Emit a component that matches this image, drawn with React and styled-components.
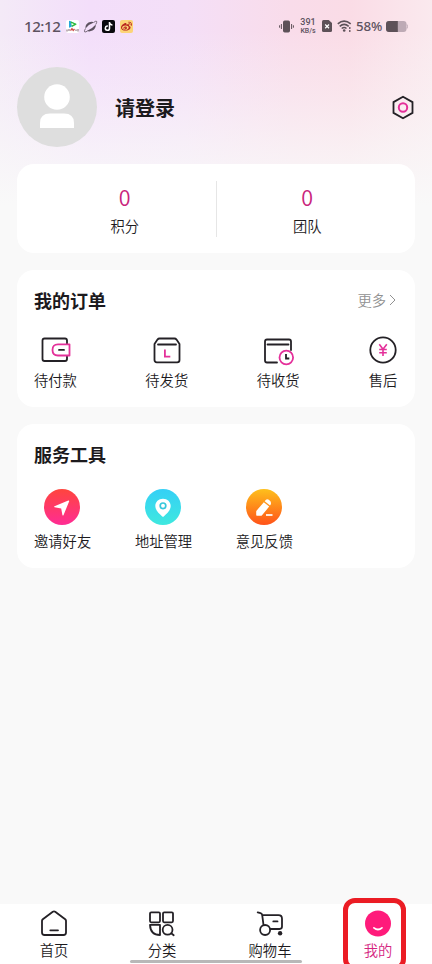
import React, { useState } from "react";
import styled, { createGlobalStyle } from "styled-components";
import { FaTiktok, FaWeibo } from "react-icons/fa6";

const GlobalStyle = createGlobalStyle`
  * {
    box-sizing: border-box;
  }
  body {
    margin: 0;
    background: #f9f9f9;
    color: #1c1a1d;
    font-family: "Noto Sans CJK SC", "Noto Sans", sans-serif;
  }
  svg {
    display: block;
    flex: none;
    overflow: visible;
  }
`;

const Page = styled.div`
  display: flex;
  flex-direction: column;
  width: 432px;
  height: 964px;
  overflow: hidden;
  background:
    linear-gradient(to bottom, rgba(249, 249, 249, 0) 30px, rgba(249, 249, 249, 0.35) 100px, #f9f9f9 205px),
    linear-gradient(to right, #f4eaf7 0, #f3defa 90px, #f4dff7 185px, #f9dcea 290px, #fadce6 350px, #fae9ee 432px);
  background-color: #f9f9f9;
`;

const StatusBar = styled.div`
  display: flex;
  justify-content: space-between;
  align-items: center;
  height: 52px;
  padding: 0 24px;
  color: #5d5260;
  font-family: "Noto Sans", sans-serif;
`;
const StatusGroup = styled.div`
  display: flex;
  align-items: center;
  gap: 5px;
`;
const Clock = styled.span`
  width: 37px;
  font-size: 15.2px;
  font-weight: 500;
  letter-spacing: -0.5px;
  line-height: 20px;
  white-space: nowrap;
`;
const AppBadge = styled.span`
  display: flex;
  align-items: center;
  justify-content: center;
  width: 13px;
  height: 13px;
  border-radius: 2px;
  background: ${(props) => props.bg};
  color: ${(props) => props.color};
  font-size: ${(props) => props.size || 9}px;
`;
const Speed = styled.span`
  display: flex;
  flex-direction: column;
  align-items: center;
  width: 18px;
  font-family: Roboto, sans-serif;
  font-weight: 500;
  white-space: nowrap;
`;
const SpeedValue = styled.span`
  font-size: 9px;
  line-height: 9px;
`;
const SpeedUnit = styled.span`
  font-size: 7px;
  line-height: 8px;
`;
const Percent = styled.span`
  width: 27px;
  margin: 0 -2px 0 -1px;
  font-size: 13.3px;
  font-weight: 500;
  letter-spacing: -0.1px;
  line-height: 18px;
  white-space: nowrap;
`;

const Header = styled.header`
  display: flex;
  align-items: center;
  height: 80px;
  margin: 15px 17px 17px;
`;
const Avatar = styled.div`
  width: 80px;
  height: 80px;
  border-radius: 50%;
  background: #dedede;
`;
const UserName = styled.h1`
  flex: 1;
  margin: 2px 0 0 18px;
  font-size: 20px;
  font-weight: 700;
  line-height: 28px;
`;

const Card = styled.section`
  flex: none;
  width: 398px;
  height: ${(props) => props.height}px;
  margin: 0 17px 17px;
  padding: 0 17px;
  border-radius: 17px;
  background: #fff;
`;
const StatsCard = styled(Card)`
  display: flex;
  align-items: center;
`;
const Stat = styled.div`
  flex: 1;
  display: flex;
  flex-direction: column;
  align-items: center;
  height: 56px;
  & + & {
    border-left: 1px solid #e6e6e6;
  }
`;
const StatValue = styled.span`
  margin-top: 2px;
  color: #c9247c;
  font-size: 21.5px;
  font-weight: 350;
  line-height: 28px;
`;
const Label = styled.span`
  color: ${(props) => props.color || "#1c1a1d"};
  font-size: 14.3px;
  font-weight: 350;
  line-height: 20px;
  white-space: nowrap;
`;
const StatLabel = styled(Label)`
  margin-top: 5px;
`;

const CardHead = styled.div`
  display: flex;
  justify-content: space-between;
  align-items: center;
  height: 26px;
  margin: 17px 0 22px;
`;
const CardTitle = styled.h2`
  margin: 0;
  font-size: 18px;
  font-weight: 700;
  line-height: 26px;
`;
const More = styled.span`
  display: flex;
  align-items: center;
  gap: 2px;
  margin-right: 1px;
  color: #919191;
  font-size: 14.3px;
  font-weight: 350;
  line-height: 20px;
`;
const Orders = styled.div`
  display: flex;
  justify-content: space-between;
`;
const OrderItem = styled.div`
  display: flex;
  flex-direction: column;
  align-items: center;
  gap: 5px;
`;
const Tools = styled.div`
  display: flex;
  gap: 43.7px;
`;
const ToolItem = styled.div`
  display: flex;
  flex-direction: column;
  align-items: center;
  gap: 6px;
`;
const ToolIcon = styled.div`
  width: 36px;
  height: 36px;
  margin-right: 1px;
  border-radius: 50%;
  background: linear-gradient(${(props) => props.from}, ${(props) => props.to});
`;

const TabBar = styled.nav`
  position: relative;
  display: flex;
  flex: none;
  height: 60px;
  margin-top: auto;
  background: #fff;
`;
const Tab = styled.div`
  position: relative;
  flex: 1;
  display: flex;
  flex-direction: column;
  align-items: center;
  gap: 2px;
  padding-top: 6px;
  cursor: pointer;
`;
const HomeIndicator = styled.div`
  position: absolute;
  left: 130px;
  bottom: 1px;
  width: 172px;
  height: 3px;
  border-radius: 2px;
  background: #b8b8b8;
`;
const Highlight = styled.div`
  position: absolute;
  top: -6px;
  left: 19px;
  width: 63px;
  height: 73px;
  border: 5px solid #eb1c24;
  border-radius: 12px;
`;

const ink = { fill: "none", stroke: "#242126", strokeWidth: 1.8, strokeLinecap: "round", strokeLinejoin: "round" };
const pink = { ...ink, stroke: "#e4309a" };

const WalletIcon = () => (
  <svg width="30" height="30" viewBox="-1 0 30 30">
    <path {...ink} d="M26 9V5.500Q26 3.500 24 3.500H3.500Q1.500 3.500 1.500 5.500V24Q1.500 26 3.500 26H24Q26 26 26 24V21" />
    <path {...pink} d="M17 9.300H28.500V20.500H17Q11.500 20.500 11.500 15Q11.500 9.300 17 9.300Z" />
    <path {...ink} d="M18 14.900H23" />
  </svg>
);

const BoxIcon = () => (
  <svg width="30" height="30" viewBox="0 0 30 30">
    <path {...ink} d="M2.500 9L5.500 4.600Q6.300 3.500 7.500 3.500H22.500Q23.700 3.500 24.500 4.600L27.500 9V25Q27.500 27.300 25.200 27.300H4.800Q2.500 27.300 2.500 25Z" />
    <path {...ink} d="M6 9.500H24" />
    <path {...pink} strokeLinecap="butt" strokeLinejoin="miter" d="M12.900 14.500V21.600H18.300" />
  </svg>
);

const ReceiveIcon = () => (
  <svg width="30" height="30" viewBox="0 0 30 30">
    <path {...ink} d="M14 27.500H4Q2 27.500 2 25.500V6.500Q2 4.500 4 4.500H26Q28 4.500 28 6.500V15" />
    <path {...ink} d="M4.500 9.500H25.500" />
    <circle {...pink} cx="23.300" cy="22.500" r="6.800" />
    <path {...ink} strokeLinecap="butt" strokeLinejoin="miter" d="M23 19V23.500H26.300" />
  </svg>
);

const RefundIcon = () => (
  <svg width="30" height="30" viewBox="0 0 30 30">
    <circle {...ink} cx="15" cy="15" r="12.700" />
    <path {...pink} strokeWidth="1.600" strokeLinecap="butt" d="M11.300 9.300L15 14.200L18.800 9.300M15 14V21M11.200 14.500H18.800M11.200 17.700H18.800" />
  </svg>
);

const HomeIcon = () => (
  <svg width="28" height="28" viewBox="0 0 28 28">
    <path {...ink} d="M2 10.800Q2 9.900 2.800 9.200L12.800 1.700Q14 .900 15.200 1.700L25.200 9.200Q26 9.900 26 10.800V22.500Q26 25 23.500 25H4.500Q2 25 2 22.500Z" />
    <path {...ink} d="M10.300 20.300H18" />
  </svg>
);

const CategoryIcon = () => (
  <svg width="28" height="28" viewBox="0 0 28 28">
    <rect {...ink} x="2" y="2.300" width="10" height="10" rx="1.200" />
    <rect {...ink} x="15" y="2.300" width="10" height="10" rx="1.200" />
    <path {...ink} d="M2 14.900H12V25Q2.500 25 2 14.900Z" />
    <circle {...ink} cx="19.600" cy="19.800" r="4.900" />
    <path {...ink} d="M23.200 23.200L25.700 25.200" />
  </svg>
);

const CartIcon = () => (
  <svg width="28" height="28" viewBox="0 0 28 28">
    <path {...ink} d="M1.700 2.300L4.600 3.200Q6 3.600 6.200 5L7.500 15M6.100 5.200H22.500Q26 5.200 26 8.700V16.500Q26 18.800 23.500 19H14.500" />
    <circle {...ink} cx="9.100" cy="20" r="5" />
    <path {...ink} d="M17.300 11.400H21.500" />
    <circle cx="24.100" cy="23.300" r="2.200" fill="#242126" />
  </svg>
);

const MineIcon = () => (
  <svg width="28" height="28" viewBox="0 0 28 28">
    <circle cx="14" cy="13.500" r="13" fill="#ff1b7b" />
    <path d="M9.900 17.800Q14 21.200 18 17.800" fill="none" stroke="#fff" strokeWidth="1.700" strokeLinecap="round" />
  </svg>
);

const SettingsIcon = () => (
  <svg width="24" height="26" viewBox="0 0 24 26">
    <path {...ink} strokeLinejoin="miter" d="M12 2.700L21.500 8.100V18.900L12 24.300L2.500 18.900V8.100Z" />
    <circle {...pink} strokeWidth="2" cx="12" cy="13.500" r="4.200" />
  </svg>
);

const VideoAppIcon = () => (
  <svg width="13" height="13" viewBox="0 0 13 13">
    <rect width="13" height="13" rx="2" fill="#fff" />
    <path d="M3 1Q3 .500 4 .900L10 4L4 7.500Q3 8 3 7Z" fill="#25a6dc" />
    <path d="M4.500 1.200L10.300 3.700Q10.900 4.200 10.200 4.700L6 7Z" fill="#31bd3c" />
    <path d="M5.500 3L8 4.200L5.500 5.500Z" fill="#fff" />
    <path d="M1 9.500V11.500M3 9V11M10 9.500V11M12 9V11.500" stroke="#806570" strokeWidth="1" />
    <path d="M4.500 10.700L6 8.700L7.200 10.500L8.500 9" fill="none" stroke="#ce4d49" strokeWidth="1.300" />
  </svg>
);

const OrbitIcon = () => (
  <svg width="13" height="13" viewBox="0 0 13 13">
    <path
      d="M1.500 8.500Q1 4.500 4.500 2.500Q7.500 1 10.300 2.200Q5 4 1.500 8.500ZM11.800 4.500Q12 8.500 8.500 10.600Q5.500 12 2.800 10.900Q8 9 11.800 4.500Z"
      fill="#5d5260"
    />
    <path d="M1.500 8.500Q-.300 11.300 .800 12Q1.600 12.300 3.500 11M10 2.200Q12.200 .600 12.700 1.400Q13 2.400 11.800 4.500" fill="none" stroke="#5d5260" strokeWidth=".8" />
  </svg>
);

const VibrateIcon = () => (
  <svg width="15" height="13" viewBox="0 0 15 13">
    <rect x="4" y=".500" width="7" height="12" rx="1.700" fill="#5d5158" />
    <path d="M2.400 4V9M12.600 4V9M.600 5.300V7.700M14.400 5.300V7.700" stroke="#5d5158" strokeWidth="1" />
  </svg>
);

const SimIcon = () => (
  <svg width="10" height="12" viewBox="0 0 10 12">
    <path d="M1.500 0H6.700L10 3V10.500Q10 12 8.500 12H1.500Q0 12 0 10.500V1.500Q0 0 1.500 0Z" fill="#5d5158" />
    <path d="M3.200 4.500L7 8.200M7 4.500L3.200 8.200" stroke="#fff" strokeWidth="1.200" />
  </svg>
);

const WifiIcon = () => (
  <svg width="15" height="12" viewBox="0 0 15 12">
    <path d="M.800 3.800Q7 -1.600 13.700 3.800M2.700 6.300Q7.200 2.600 11.700 6.300M4.700 8.500Q7.200 6.500 9.500 8.500" fill="none" stroke="#5d5158" strokeWidth="1.600" />
    <circle cx="7.200" cy="10.500" r="1.300" fill="#5d5158" />
    <path d="M12.800 7V9M12.800 10V12" stroke="#5d5158" strokeWidth="1.300" />
  </svg>
);

const BatteryIcon = () => (
  <svg width="22" height="11" viewBox="0 0 22 11">
    <path d="M3 0H17.500Q20.500 0 20.500 3V8Q20.500 11 17.500 11H3Q0 11 0 8V3Q0 0 3 0Z" fill="#bdaab5" />
    <path d="M3 0H11.800V11H3Q0 11 0 8V3Q0 0 3 0Z" fill="#5d5158" />
    <path d="M21 3.500Q22 5.500 21 7.500" stroke="#bdaab5" strokeWidth="1" fill="none" />
  </svg>
);

const PlaneGlyph = () => (
  <svg width="36" height="36" viewBox="0 0 36 36">
    <path d="M10.500 17.200L24.300 11.500Q25.500 11.200 25.100 12.400L19.600 26Q18.900 27.200 18.400 26L17.200 19.500L10.600 18.200Q9.600 17.700 10.500 17.200Z" fill="#fff" />
  </svg>
);

const PinGlyph = () => (
  <svg width="36" height="36" viewBox="0 0 36 36">
    <path d="M18 9.700C22.400 9.700 25.700 12.900 25.700 17C25.700 21.500 21.500 24.800 19 27.200Q18 28.200 17 27.200C14.500 24.800 10.300 21.500 10.300 17C10.300 12.900 13.600 9.700 18 9.700Z" fill="#fff" />
    <circle cx="18" cy="16.800" r="2.800" fill="none" stroke="#38c8dc" strokeWidth="1.700" />
  </svg>
);

const PencilGlyph = () => (
  <svg width="36" height="36" viewBox="0 0 36 36">
    <path d="M17.800 13.300L23.200 17.600L16 26.200Q15.600 26.700 15 26.700H10.900Q10.200 26.700 10.200 26V22.600Q10.200 22.100 10.500 21.700Z" fill="#fff" />
    <path d="M18.700 12.200L19.700 11Q21 9.800 22.900 10.800Q25.600 12.700 25 14.900L24 16.400Z" fill="#fff" />
    <path d="M20 26H26.500" stroke="#fff" strokeWidth="1.700" />
  </svg>
);

const stats = [
  { label: "积分", value: 0 },
  { label: "团队", value: 0 },
];

const orders = [
  { label: "待付款", Icon: WalletIcon },
  { label: "待发货", Icon: BoxIcon },
  { label: "待收货", Icon: ReceiveIcon },
  { label: "售后", Icon: RefundIcon },
];

const tools = [
  { label: "邀请好友", Icon: PlaneGlyph, from: "#ff453d", to: "#ff2c94" },
  { label: "地址管理", Icon: PinGlyph, from: "#35d0f6", to: "#3fe8df" },
  { label: "意见反馈", Icon: PencilGlyph, from: "#fec01c", to: "#ff5219" },
];

const tabs = [
  { label: "首页", Icon: HomeIcon },
  { label: "分类", Icon: CategoryIcon },
  { label: "购物车", Icon: CartIcon },
  { label: "我的", Icon: MineIcon },
];

export default function App() {
  const [active, setActive] = useState(3);

  return (
    <>
      <GlobalStyle />
      <Page>
        <StatusBar>
          <StatusGroup>
            <Clock>12:12</Clock>
            <VideoAppIcon />
            <OrbitIcon />
            <AppBadge bg="#09090d" color="#fff">
              <FaTiktok />
            </AppBadge>
            <AppBadge bg="#fcd477" color="#b8251e" size={11}>
              <FaWeibo />
            </AppBadge>
          </StatusGroup>
          <StatusGroup>
            <VibrateIcon />
            <Speed>
              <SpeedValue>391</SpeedValue>
              <SpeedUnit>KB/s</SpeedUnit>
            </Speed>
            <SimIcon />
            <WifiIcon />
            <Percent>58%</Percent>
            <BatteryIcon />
          </StatusGroup>
        </StatusBar>

        <Header>
          <Avatar>
            <svg width="80" height="80" viewBox="0 0 80 80">
              <circle cx="40" cy="30" r="12.800" fill="#fff" />
              <path d="M23 61V56Q23 46.500 33 46.500H47Q57 46.500 57 56V61Z" fill="#fff" />
            </svg>
          </Avatar>
          <UserName>请登录</UserName>
          <SettingsIcon />
        </Header>

        <StatsCard height={89}>
          {stats.map((stat) => (
            <Stat key={stat.label}>
              <StatValue>{stat.value}</StatValue>
              <StatLabel>{stat.label}</StatLabel>
            </Stat>
          ))}
        </StatsCard>

        <Card height={137}>
          <CardHead>
            <CardTitle>我的订单</CardTitle>
            <More>
              更多
              <svg width="9" height="12" viewBox="0 0 9 12">
                <path d="M2 1L7 6L2 11" fill="none" stroke="#919191" strokeWidth="1" />
              </svg>
            </More>
          </CardHead>
          <Orders>
            {orders.map(({ label, Icon }) => (
              <OrderItem key={label}>
                <Icon />
                <Label>{label}</Label>
              </OrderItem>
            ))}
          </Orders>
        </Card>

        <Card height={144}>
          <CardHead>
            <CardTitle>服务工具</CardTitle>
          </CardHead>
          <Tools>
            {tools.map(({ label, Icon, from, to }) => (
              <ToolItem key={label}>
                <ToolIcon from={from} to={to}>
                  <Icon />
                </ToolIcon>
                <Label>{label}</Label>
              </ToolItem>
            ))}
          </Tools>
        </Card>

        <TabBar>
          {tabs.map(({ label, Icon }, index) => (
            <Tab key={label} onClick={() => setActive(index)}>
              <Icon />
              <Label color={index === active ? "#d5257f" : undefined}>{label}</Label>
              {index === active && <Highlight />}
            </Tab>
          ))}
          <HomeIndicator />
        </TabBar>
      </Page>
    </>
  );
}
